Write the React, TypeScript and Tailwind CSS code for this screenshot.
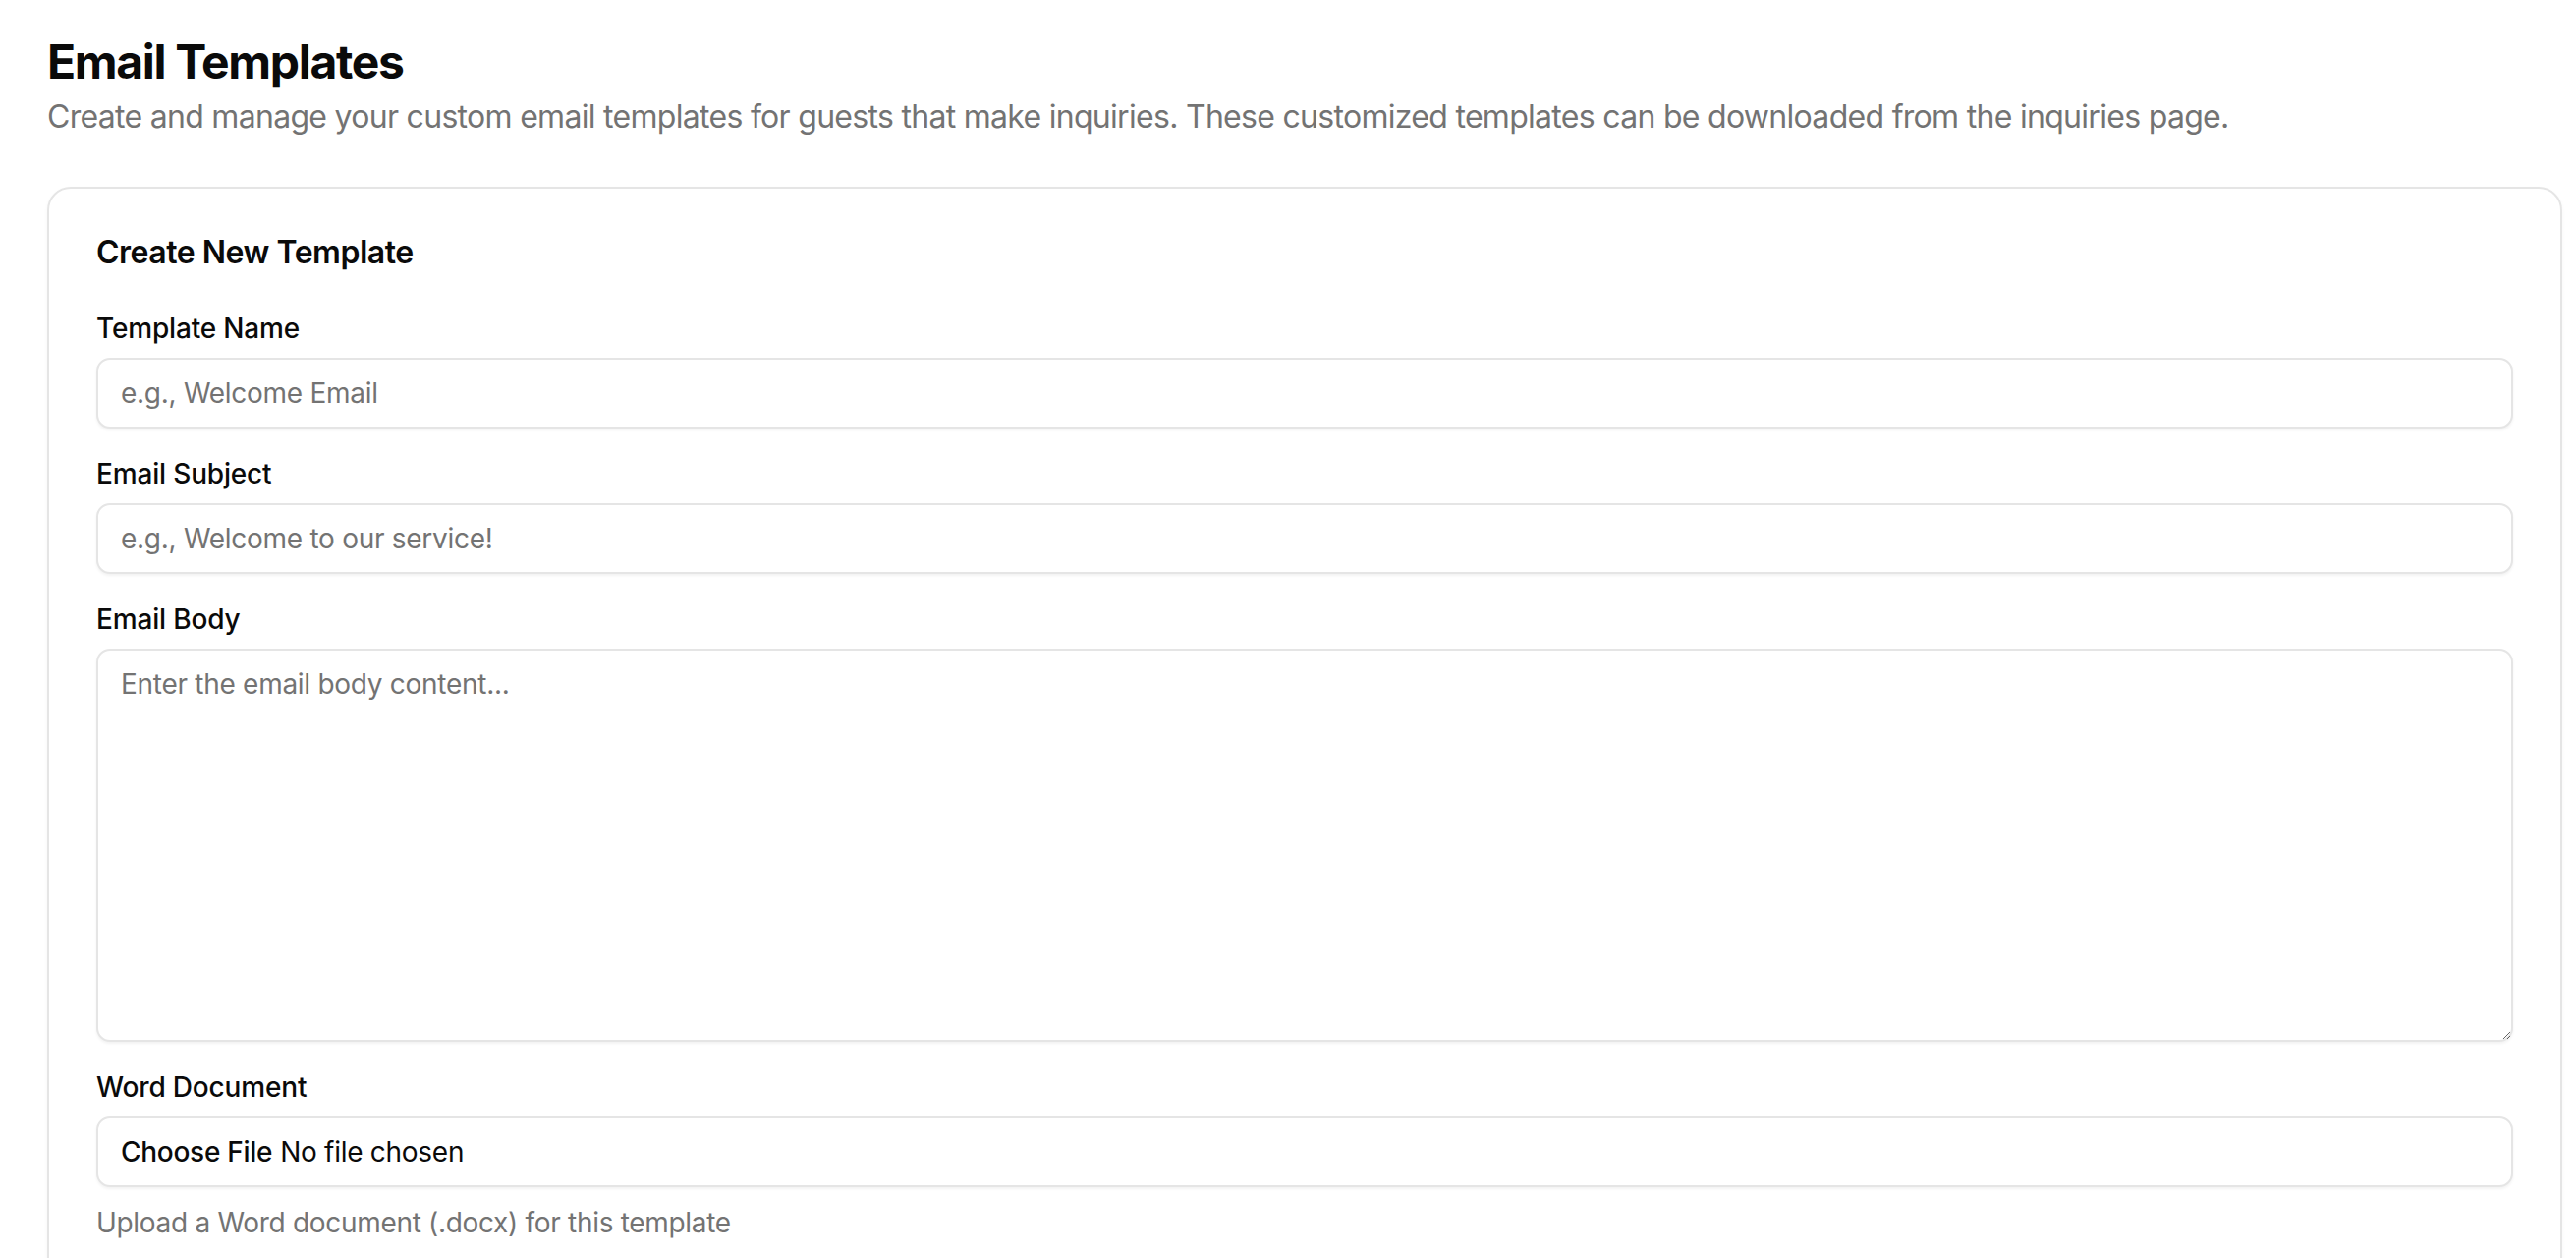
import React from 'react';

const font = { fontFamily: 'Inter, "Noto Sans", sans-serif' };

interface FieldProps {
  label: string;
  children: React.ReactNode;
  hint?: string;
}

const Field = ({ label, children, hint }: FieldProps) => (
  <div className="flex flex-col gap-[16px]">
    <label className="text-[28px] font-medium leading-none tracking-[-0.006em] text-[#0a0a0a]">{label}</label>
    {children}
    {hint && <p className="text-[28px] leading-[40px] tracking-[-0.011em] text-[#737373]">{hint}</p>}
  </div>
);

const inputClass =
  'h-[72px] w-full rounded-[14px] border-2 border-[#e5e5e5] bg-white px-[23px] text-[28px] tracking-[-0.01em] text-[#0a0a0a] placeholder:text-[#737373] shadow-[0_2px_3px_rgba(0,0,0,0.05)] outline-none';

const App = () => {
  return (
    <div className="min-h-screen bg-white pl-[48px] pr-[14px] pt-[31px] overflow-hidden" style={font}>
      <h1 className="text-[48px] leading-[64px] font-bold tracking-[-0.028em] text-[#0a0a0a]">Email Templates</h1>
      <p className="text-[32px] leading-[48px] tracking-[-0.022em] text-[#737373]">
        Create and manage your custom email templates for guests that make inquiries. These customized templates can be
        downloaded from the inquiries page.
      </p>

      <div className="mt-[47px] rounded-[24px] border-2 border-[#e5e5e5] bg-white py-[49px] px-[48px] shadow-[0_2px_4px_rgba(0,0,0,0.04)]">
        <h2 className="text-[32px] leading-none font-semibold tracking-[-0.015em] text-[#0a0a0a]">Create New Template</h2>

        <div className="mt-[47px] flex flex-col gap-[32px]">
          <Field label="Template Name">
            <input className={inputClass} placeholder="e.g., Welcome Email" />
          </Field>
          <Field label="Email Subject">
            <input className={inputClass} placeholder="e.g., Welcome to our service!" />
          </Field>
          <Field label="Email Body">
            <textarea
              className="h-[400px] w-full rounded-[14px] border-2 border-[#e5e5e5] bg-white px-[23px] py-[14px] text-[28px] leading-[40px] tracking-[-0.01em] text-[#0a0a0a] placeholder:text-[#737373] shadow-[0_2px_3px_rgba(0,0,0,0.05)] outline-none"
              placeholder="Enter the email body content..."
            />
          </Field>
          <Field label="Word Document" hint="Upload a Word document (.docx) for this template">
            <label className="flex h-[72px] w-full cursor-pointer items-center rounded-[14px] border-2 border-[#e5e5e5] bg-white px-[23px] text-[28px] tracking-[-0.01em] text-[#0a0a0a] shadow-[0_2px_3px_rgba(0,0,0,0.05)]">
              <input type="file" accept=".docx" className="hidden" />
              <span className="font-medium mr-[8px]">Choose File</span>
              <span>No file chosen</span>
            </label>
          </Field>
          <div className="mx-[90px] h-[60px] rounded-t-[30px] bg-gradient-to-b from-white to-[#f6f6f6] blur-[6px]" />
        </div>
      </div>
    </div>
  );
};

export default App;
